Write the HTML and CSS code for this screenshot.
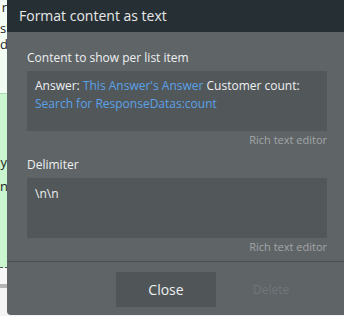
FILE: index.html
```html
<!DOCTYPE html>
<html lang="en">
<head>
  <meta charset="UTF-8" />
  <title>Format content as text</title>
  <link rel="stylesheet" href="styles.css">
</head>
<body>
  <div class="page">
    <div class="page-top">
      <p>r</p>
      <p class="gap">s'</p>
      <p class="gap-small">d</p>
    </div>
    <div class="page-green">
      <p>y</p>
      <p class="gap">nt</p>
    </div>
    <div class="page-bottom"></div>
  </div>

  <div class="dialog">
    <div class="dialog-header">Format content as text</div>
    <div class="dialog-body">
      <div class="field">
        <label>Content to show per list item</label>
        <div class="editor">
          Answer: <span class="dyn">This Answer's Answer</span> Customer count:
          <span class="dyn">Search for ResponseDatas:count</span>
        </div>
        <div class="hint">Rich text editor</div>
      </div>
      <div class="field">
        <label>Delimiter</label>
        <div class="editor tall">\n\n</div>
        <div class="hint">Rich text editor</div>
      </div>
    </div>
    <div class="dialog-footer">
      <button class="btn-close">Close</button>
      <span class="btn-delete">Delete</span>
    </div>
  </div>
</body>
</html>
```

FILE: styles.css
```css
html, body {
  margin: 0;
  height: 100%;
  overflow: hidden;
}
body {
  font-family: "Open Sans", "Noto Sans", sans-serif;
  background-color: #ffffff;
  position: relative;
}
.page {
  font-size: 13px;
  color: #222;
  height: 100%;
}
.page p {
  margin: 0;
  line-height: 14px;
  text-align: right;
  width: 7px;
  white-space: nowrap;
}
.page p.gap {
  margin-top: 7px;
}
.page p.gap-small {
  margin-top: 2px;
}
.page-top {
  height: 94px;
  box-sizing: border-box;
  background-color: #f2fbf4;
  border-bottom: 1px solid #a6dcab;
}
.page-green {
  height: 174px;
  padding-top: 61px;
  box-sizing: border-box;
  background-color: #c9f5cf;
  border-bottom: 1px dashed #555;
}
.page-green p.gap {
  margin-top: 10px;
}
.page-bottom {
  height: 48px;
  background: linear-gradient(#f8f8f8 0, #f8f8f8 16px, #b5b5b5 16px, #b5b5b5 20px, #f4f4f4 20px);
}

.dialog {
  position: absolute;
  left: 7px;
  top: 0;
  width: 340px;
  height: 315px;
  background-color: #5f6467;
  border-radius: 0 0 4px 4px;
  display: flex;
  flex-direction: column;
}
.dialog-header {
  height: 32px;
  background-color: #263034;
  color: #e6e8e9;
  font-size: 14px;
  line-height: 32px;
  padding-left: 12px;
}
.dialog-body {
  padding: 18px 20px 0 20px;
  height: 211px;
}
.field label {
  display: block;
  color: #eef0f1;
  font-size: 12px;
  line-height: 16px;
  margin-bottom: 5px;
}
.editor {
  background-color: #52575a;
  color: #eef0f1;
  font-size: 12px;
  line-height: 18px;
  height: 60px;
  padding: 6px 8px;
  box-sizing: border-box;
}
.editor.tall {
  padding-top: 7px;
}
.dyn {
  color: #5aa2e8;
}
.hint {
  text-align: right;
  color: #a2a6a8;
  font-size: 11px;
  line-height: 16px;
  margin-top: 1px;
  margin-bottom: 9px;
}
.dialog-footer {
  border-top: 1px solid #4b4f52;
  display: flex;
  align-items: center;
  padding: 10px 0 0 109px;
  gap: 37px;
}
.btn-close {
  width: 100px;
  height: 35px;
  background-color: #505558;
  border: none;
  color: #eef0f1;
  font-family: "Open Sans", "Noto Sans", sans-serif;
  font-size: 14px;
}
.btn-delete {
  color: #71767a;
  font-size: 12px;
}
```
